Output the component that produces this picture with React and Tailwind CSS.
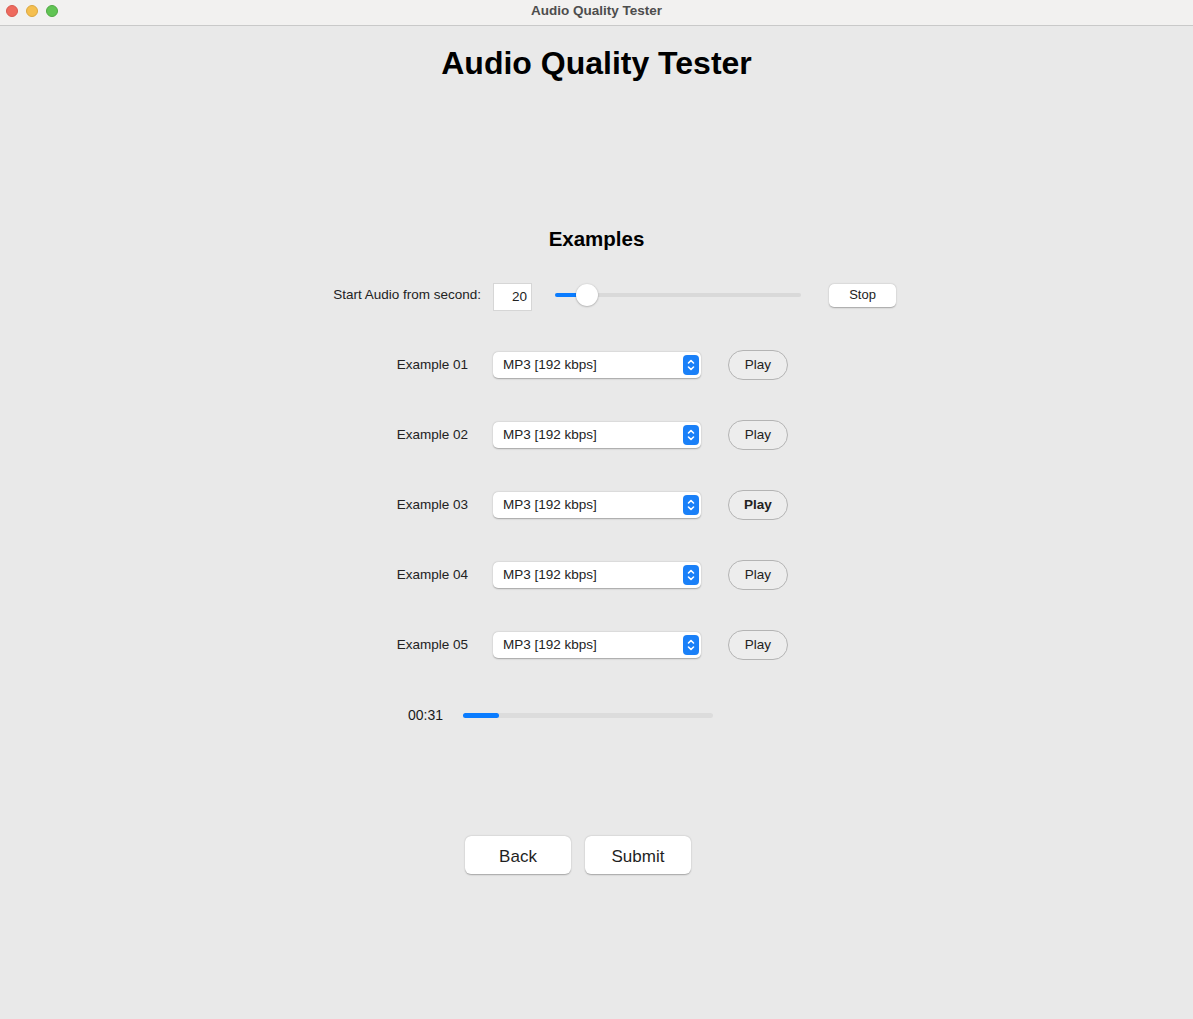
import React from "react";

const font = { fontFamily: '"Liberation Sans", Arial, sans-serif' };

function Stepper() {
  return (
    <div className="w-[16px] h-[20px] rounded-[4px] bg-[#1a80f8] flex items-center justify-center">
      <svg width="10" height="16" viewBox="0 0 10 16" fill="none">
        <path d="M2.5 6 L5 3.5 L7.5 6" stroke="white" strokeWidth="1.6" strokeLinecap="round" strokeLinejoin="round" />
        <path d="M2.5 10 L5 12.5 L7.5 10" stroke="white" strokeWidth="1.6" strokeLinecap="round" strokeLinejoin="round" />
      </svg>
    </div>
  );
}

function ExampleRow({ n, bold }) {
  return (
    <div className="flex items-center h-[30px] ml-[320px]">
      <div className="w-[148px] text-right text-[13.5px] text-[#222] pt-[1px]">Example {n}</div>
      <div className="ml-[25px] w-[208px] h-[26px] bg-white rounded-[5px] shadow-[0_0.5px_1.5px_rgba(0,0,0,0.3)] flex items-center justify-between pl-[10px] pr-[2px]">
        <span className="text-[13.5px] text-[#222]">MP3 [192 kbps]</span>
        <Stepper />
      </div>
      <div
        className={`ml-[27px] w-[60px] h-[30px] rounded-full border border-[#b4b4b4] bg-[#ededed] flex items-center justify-center text-[13.5px] text-[#222] pt-[1px] ${bold ? "font-bold" : ""}`}
      >
        Play
      </div>
    </div>
  );
}

export default function App() {
  return (
    <div className="w-[1193px] h-[1019px] bg-[#e9e9e9] flex flex-col" style={font}>
      {/* title bar */}
      <div className="h-[26px] bg-[#f2f1f0] border-b border-[#c9c9c9] relative flex items-center justify-center shrink-0">
        <div className="absolute left-[6px] top-[5px] flex gap-[8px]">
          <div className="w-[12px] h-[12px] rounded-full bg-[#ee6a5e] border border-[#d85a4f]" />
          <div className="w-[12px] h-[12px] rounded-full bg-[#f5bf4f] border border-[#dba83f]" />
          <div className="w-[12px] h-[12px] rounded-full bg-[#61c454] border border-[#50a844]" />
        </div>
        <span className="text-[13.5px] font-bold text-[#4d4d4d] mt-[-2px]">Audio Quality Tester</span>
      </div>

      <h1 className="mt-[17px] text-center text-[32px] leading-[40px] font-bold text-black">Audio Quality Tester</h1>

      <h2 className="mt-[144px] text-center text-[20.5px] leading-[24px] font-bold text-black">Examples</h2>

      {/* start row */}
      <div className="mt-[29px] flex items-center h-[30px] ml-[320px]">
        <div className="w-[161px] text-right text-[13.5px] text-[#222] pt-[1px]">Start Audio from second:</div>
        <div className="ml-[12px] w-[39px] h-[28px] bg-white border border-[#d6d6d6] flex items-end justify-end pr-[4px] pb-[3px] text-[13.5px] text-[#222] mt-[4px]">
          20
        </div>
        <div className="ml-[23px] w-[246px] h-[24px] relative flex items-center">
          <div className="w-full h-[4px] rounded-full bg-[#d9d9d9]" />
          <div className="absolute left-0 w-[32px] h-[4px] rounded-full bg-[#0a7cff]" />
          <div className="absolute left-[21px] w-[22px] h-[22px] rounded-full bg-white shadow-[0_0.5px_2px_rgba(0,0,0,0.35)]" />
        </div>
        <div className="ml-[28px] w-[67px] h-[23px] rounded-[5px] bg-white shadow-[0_0.5px_1.5px_rgba(0,0,0,0.3)] flex items-center justify-center text-[13px] text-[#222]">
          Stop
        </div>
      </div>

      <div className="mt-[40px] flex flex-col gap-[40px]">
        <ExampleRow n="01" />
        <ExampleRow n="02" />
        <ExampleRow n="03" bold />
        <ExampleRow n="04" />
        <ExampleRow n="05" />
      </div>

      {/* progress */}
      <div className="mt-[40px] flex items-center h-[30px] ml-[320px]">
        <div className="w-[123px] text-right text-[14px] text-[#1a1a1a]">00:31</div>
        <div className="ml-[20px] w-[250px] h-[5px] rounded-full bg-[#dcdcdc] relative">
          <div className="absolute left-0 top-0 h-[5px] w-[36px] rounded-full bg-[#0a7cff]" />
        </div>
      </div>

      {/* buttons */}
      <div className="mt-[106px] ml-[465px] flex gap-[14px]">
        <div className="w-[106px] h-[38px] rounded-[6px] bg-white shadow-[0_0.5px_1.5px_rgba(0,0,0,0.3)] flex items-center justify-center pt-[3px] text-[17px] text-[#1f1f1f]">
          Back
        </div>
        <div className="w-[106px] h-[38px] rounded-[6px] bg-white shadow-[0_0.5px_1.5px_rgba(0,0,0,0.3)] flex items-center justify-center pt-[3px] text-[17px] text-[#1f1f1f]">
          Submit
        </div>
      </div>
    </div>
  );
}
